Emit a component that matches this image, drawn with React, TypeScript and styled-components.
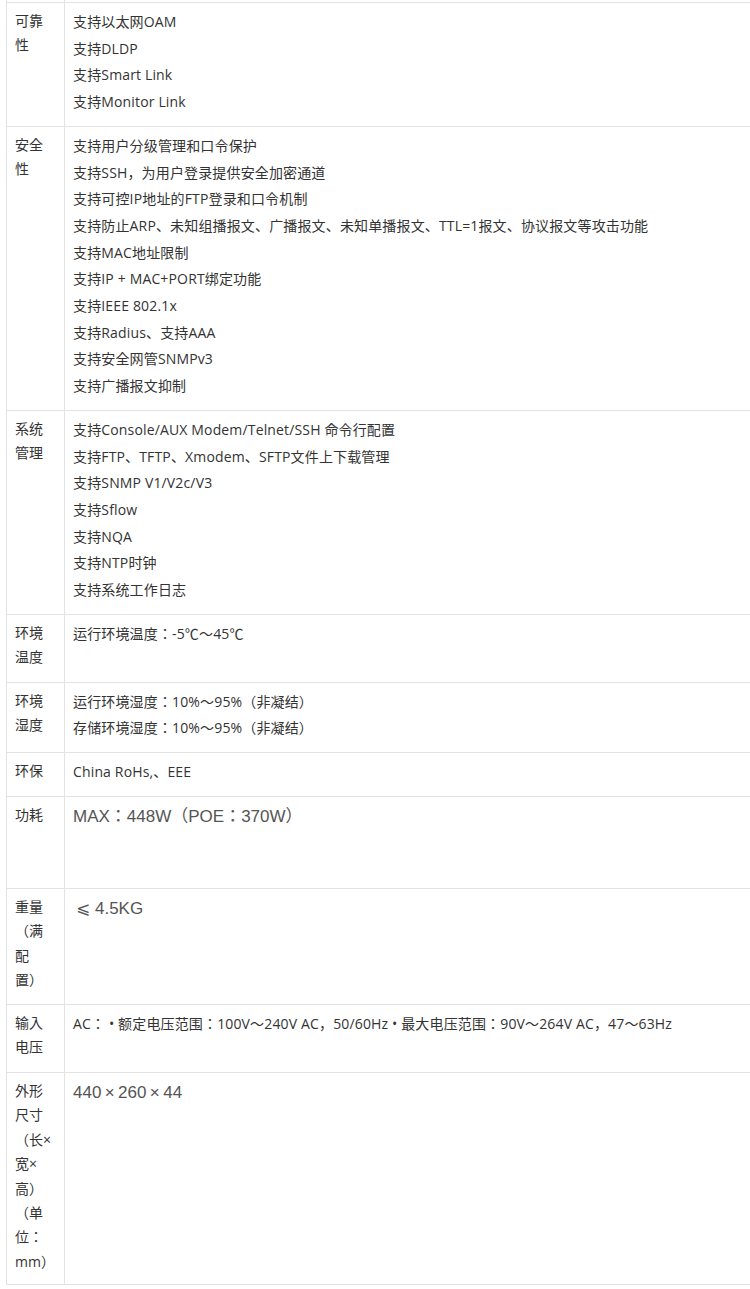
import React from 'react'
import styled, { createGlobalStyle } from 'styled-components'

const GlobalStyle = createGlobalStyle`
  html, body {
    margin: 0;
    padding: 0;
    background: #fff;
    overflow: hidden;
  }
  body {
    font-family: "Open Sans", "Noto Sans CJK JP", "Noto Sans CJK SC", sans-serif;
    color: #333;
  }
`

const Wrap = styled.div`
  padding-left: 6px;
  width: 820px;
`

const Table = styled.table`
  border-collapse: collapse;
  width: 800px;
  font-size: 14px;
`

const Cell = styled.td`
  border: 1px solid #e3e3e3;
  vertical-align: top;
  padding: 6px 8px 10px;
`

const Sliver = styled(Cell)`
  border-top: 0;
  padding: 0;
  height: 2px;
`

const LabelCell = styled(Cell)`
  width: 41px;
  line-height: 24.4px;
`

const ContentCell = styled(Cell)<{ $h?: number }>`
  line-height: 26.7px;
  ${({ $h }) => ($h ? `height: ${$h}px;` : '')}
`

const LabelLine = styled.div`
  white-space: nowrap;
`

const Line = styled.div`
  white-space: pre;
  letter-spacing: 0.15px;
`

const BigText = styled.div<{ $indent?: number }>`
  font-family: "Liberation Sans", "Noto Sans CJK JP", "DejaVu Sans", sans-serif;
  font-size: 17px;
  color: #555;
  line-height: 27px;
  padding-left: ${({ $indent }) => $indent || 0}px;
`

type Spec = {
  label: string[]
  lines?: string[]
  big?: string
  indent?: number
  h?: number
}

const specs: Spec[] = [
  {
    label: ['可靠', '性'],
    lines: ['支持以太网OAM', '支持DLDP', '支持Smart Link', '支持Monitor Link'],
  },
  {
    label: ['安全', '性'],
    lines: [
      '支持用户分级管理和口令保护',
      '支持SSH，为用户登录提供安全加密通道',
      '支持可控IP地址的FTP登录和口令机制',
      '支持防止ARP、未知组播报文、广播报文、未知单播报文、TTL=1报文、协议报文等攻击功能',
      '支持MAC地址限制',
      '支持IP + MAC+PORT绑定功能',
      '支持IEEE 802.1x',
      '支持Radius、支持AAA',
      '支持安全网管SNMPv3',
      '支持广播报文抑制',
    ],
  },
  {
    label: ['系统', '管理'],
    lines: [
      '支持Console/AUX Modem/Telnet/SSH 命令行配置',
      '支持FTP、TFTP、Xmodem、SFTP文件上下载管理',
      '支持SNMP V1/V2c/V3',
      '支持Sflow',
      '支持NQA',
      '支持NTP时钟',
      '支持系统工作日志',
    ],
  },
  { label: ['环境', '温度'], lines: ['运行环境温度：-5℃～45℃'], h: 51 },
  {
    label: ['环境', '湿度'],
    lines: ['运行环境湿度：10%～95%（非凝结）', '存储环境湿度：10%～95%（非凝结）'],
  },
  { label: ['环保'], lines: ['China RoHs,、EEE'] },
  { label: ['功耗'], big: 'MAX：448W（POE：370W）', h: 75 },
  { label: ['重量', '（满', '配', '置）'], big: '\u2A7D 4.5KG', indent: 3, h: 99 },
  {
    label: ['输入', '电压'],
    lines: ['AC： • 额定电压范围：100V～240V AC，50/60Hz • 最大电压范围：90V～264V AC，47～63Hz'],
    h: 51,
  },
  {
    label: ['外形', '尺寸', '（长×', '宽×', '高）', '（单', '位：', 'mm）'],
    big: '440\u2009×\u2009260\u2009×\u200944',
    indent: -1,
  },
]

const App = () => {
  return (
    <Wrap>
      <GlobalStyle />
      <Table>
        <tbody>
          <tr>
            <Sliver />
            <Sliver />
          </tr>
          {specs.map((s, i) => (
            <tr key={i}>
              <LabelCell>
                {s.label.map((l, j) => (
                  <LabelLine key={j}>{l}</LabelLine>
                ))}
              </LabelCell>
              <ContentCell $h={s.h}>
                {s.lines && s.lines.map((l, j) => <Line key={j}>{l}</Line>)}
                {s.big && <BigText $indent={s.indent}>{s.big}</BigText>}
              </ContentCell>
            </tr>
          ))}
        </tbody>
      </Table>
    </Wrap>
  )
}

export default App
